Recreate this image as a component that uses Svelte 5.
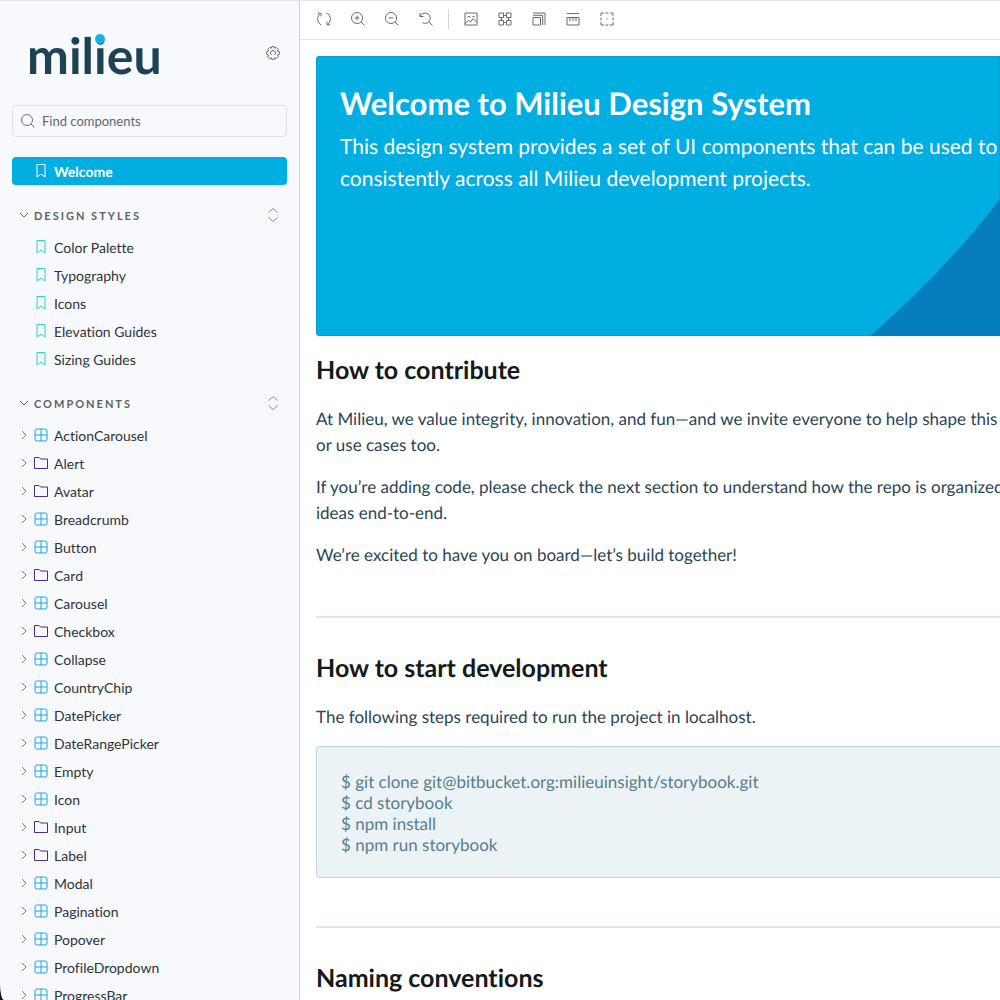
<script>
    const pages = ["Color Palette", "Typography", "Icons", "Elevation Guides", "Sizing Guides"];

    const components = [
        { name: "ActionCarousel" },
        { name: "Alert", folder: true },
        { name: "Avatar", folder: true },
        { name: "Breadcrumb" },
        { name: "Button" },
        { name: "Card", folder: true },
        { name: "Carousel" },
        { name: "Checkbox", folder: true },
        { name: "Collapse" },
        { name: "CountryChip" },
        { name: "DatePicker" },
        { name: "DateRangePicker" },
        { name: "Empty" },
        { name: "Icon" },
        { name: "Input", folder: true },
        { name: "Label", folder: true },
        { name: "Modal" },
        { name: "Pagination" },
        { name: "Popover" },
        { name: "ProfileDropdown" },
        { name: "ProgressBar" },
    ];

    const zoomTools = [
        {
            label: "Remount component",
            d: "M4.500 13C-.5 10.500-.5 4.500 3.500 1.500M.8 1.200h3.200v3.200M9.500 1C14.500 3.500 14.500 9.500 10.500 12.500M13.200 12.800H10V9.600",
        },
        { label: "Zoom in", d: "M6 .5a5.500 5.500 0 1 0 0 11A5.500 5.500 0 0 0 6 .5M10 10l3.500 3.500M6 3.500v5M3.500 6h5" },
        { label: "Zoom out", d: "M6 .5a5.500 5.500 0 1 0 0 11A5.500 5.500 0 0 0 6 .5M10 10l3.500 3.500M3.500 6h5" },
        { label: "Reset zoom", d: "M1 1v3.500h3.500M1.200 4.300A5.200 5.200 0 1 1 3.500 10.800M10 10l3.500 3.500" },
    ];

    const viewTools = [
        {
            label: "Change background",
            d: "M1 1h12v12H1zM3.500 5.500l1.500-1.500 1.500 1.500M1 11.500l3.500-3 2 1.500 2.500-3.500 4 4M8.500 4.500h2",
        },
        {
            label: "Apply grid",
            d: "M1 1h4.500v4.500H1zM8.500 1H13v4.500H8.500zM1 8.500h4.500V13H1zM8.500 8.500H13V13H8.500zM5.500 3.500h3M5.500 10.500h3M3.500 5.500v3M10.500 5.500v3",
        },
        { label: "Change viewport", d: "M1 5.500h7.500V13H1zM1 3.300h9.700V13M1 1h12v12" },
        { label: "Measure", d: "M1 1.500h12M1 5.500h12v7.500H1zM4 5.500v3.500M7 5.500v3.500M10 5.500v3.500" },
        {
            label: "Apply outlines",
            d: "M1 4V1h3M5.500 1h3M10 1h3v3M13 5.500v3M13 10v3h-3M8.500 13h-3M4 13H1v-3M1 8.500v-3M6.500 7h1",
        },
    ];

    let search = "";
    let open = { styles: true, components: true };
</script>

{#snippet bookmark()}
    <svg class="bookmark" width="14" height="14" viewBox="0 0 14 14" aria-hidden="true">
        <path d="M3 0.500h8v12.500L7 10.200 3 13z" />
    </svg>
{/snippet}

{#snippet heading(key, text)}
    <div class="heading">
        <button class="toggle" aria-expanded={open[key]} on:click={() => (open[key] = !open[key])}>
            <svg width="10" height="10" viewBox="0 0 10 10" aria-hidden="true"><path d="M1 3l4 4 4-4" /></svg>
            {text}
        </button>
        <button class="expand" aria-label="Expand all">
            <svg width="14" height="16" viewBox="0 0 14 16" aria-hidden="true">
                <path d="M2.500 5.500L7 1.500l4.500 4M2.500 10.500l4.500 4 4.500-4" />
            </svg>
        </button>
    </div>
{/snippet}

{#snippet tool(item)}
    <button class="tool" aria-label={item.label}>
        <svg width="14" height="14" viewBox="0 0 14 14" aria-hidden="true"><path d={item.d} /></svg>
    </button>
{/snippet}

<div class="app">
    <nav class="sidebar">
        <div class="brand">
            <a href="#home" aria-label="Milieu">
                <svg class="logo" width="140" height="56" viewBox="0 0 140 56">
                    <text x="-1" y="49">milieu</text>
                    <circle cx="72" cy="14" r="5" />
                </svg>
            </a>
            <button class="settings" aria-label="Settings">
                <svg width="14" height="14" viewBox="0 0 14 14" aria-hidden="true">
                    <path
                        d="M5.700 0.700h2.600l.5 1.500 1.500-.7 1.900 1.900-.7 1.500 1.800.8v2.600l-1.800.8.7 1.500-1.900 1.900-1.500-.7-.5 1.500H5.700l-.5-1.500-1.500.7-1.900-1.900.7-1.500-1.800-.8V5.700l1.800-.8-.7-1.500 1.900-1.900 1.500.7z"
                    />
                    <path d="M5.500 9A2.500 2.500 0 1 1 8.500 9" />
                </svg>
            </button>
        </div>

        <label class="search">
            <svg width="14" height="14" viewBox="0 0 14 14" aria-hidden="true">
                <path d="M6 .5a5.500 5.500 0 1 0 0 11a5.500 5.500 0 0 0 0-11M10 10l3.500 3.500" />
            </svg>
            <input type="text" placeholder="Find components" aria-label="Find components" bind:value={search} />
        </label>

        <a class="item selected" href="#welcome">{@render bookmark()}Welcome</a>

        {@render heading("styles", "Design Styles")}
        {#if open.styles}
            {#each pages as page}
                <a class="item" href="#{page}">{@render bookmark()}{page}</a>
            {/each}
        {/if}

        {@render heading("components", "Components")}
        {#if open.components}
            {#each components as { name, folder }}
                <button class="item">
                    <svg class="chevron" width="8" height="10" viewBox="0 0 8 10" aria-hidden="true">
                        <path d="M2 1l4 4-4 4" />
                    </svg>
                    {#if folder}
                        <svg class="folder" width="14" height="14" viewBox="0 0 14 14" aria-hidden="true">
                            <path d="M.5 1.500h4.500l1.500 1.500h7v9.500H.5z" />
                        </svg>
                    {:else}
                        <svg class="component" width="14" height="14" viewBox="0 0 14 14" aria-hidden="true">
                            <rect x="1" y="1" width="12" height="12" rx="2" />
                            <path d="M7 1v12M1 7h12" />
                        </svg>
                    {/if}
                    {name}
                </button>
            {/each}
        {/if}
    </nav>

    <main>
        <div class="toolbar">
            {#each zoomTools as item}
                {@render tool(item)}
            {/each}
            <span class="divider"></span>
            {#each viewTools as item}
                {@render tool(item)}
            {/each}
        </div>

        <div class="docs">
            <header class="banner">
                <h1>Welcome to Milieu Design System</h1>
                <p>
                    This design system provides a set of UI components that can be used to im<br />
                    consistently across all Milieu development projects.
                </p>
                <svg class="curve" width="130" height="137" viewBox="0 0 130 137" aria-hidden="true">
                    <path d="M0 137Q75 72 130 0v137z" />
                </svg>
            </header>

            <section>
                <h2>How to contribute</h2>
                <p>
                    At Milieu, we value integrity, innovation, and fun—and we invite everyone to help shape this d<br />
                    or use cases too.
                </p>
                <p>
                    If you’re adding code, please check the next section to understand how the repo is organized f<br />
                    ideas end-to-end.
                </p>
                <p>We’re excited to have you on board—let’s build together!</p>
            </section>

            <section>
                <h2>How to start development</h2>
                <p>The following steps required to run the project in localhost.</p>
                <pre>$ git clone git@bitbucket.org:milieuinsight/storybook.git
$ cd storybook
$ npm install
$ npm run storybook</pre>
            </section>

            <section>
                <h2>Naming conventions</h2>
            </section>
        </div>
    </main>
</div>

<style>
    :global(body) {
        margin: 0;
        overflow: hidden;
    }

    * {
        box-sizing: border-box;
    }

    .app {
        display: flex;
        height: 100vh;
        overflow: hidden;
        background: #111;
        font-family: "Lato", sans-serif;
        font-variant-ligatures: none;
        text-rendering: geometricPrecision;
    }

    svg {
        flex: none;
        fill: none;
        stroke: currentColor;
    }

    button {
        padding: 0;
        border: 0;
        background: none;
        font: inherit;
        color: inherit;
        cursor: pointer;
    }

    .sidebar {
        flex: none;
        width: 300px;
        padding: 0 12px;
        overflow: hidden;
        border-top: 1px solid #e3e6e9;
        border-right: 1px solid #cdd1d5;
        border-bottom-left-radius: 4px 16px;
        background: #f7f9fd;
        font-size: 14px;
        color: #2e3438;
    }

    .brand {
        display: flex;
        align-items: center;
        justify-content: space-between;
        height: 104px;
        padding: 0 7px 0 16px;
    }

    .brand a {
        display: flex;
    }

    .logo text {
        fill: #1c4354;
        stroke: none;
        font-size: 50px;
        font-weight: 700;
    }

    .logo circle {
        fill: #18b3e6;
        stroke: none;
    }

    .settings,
    .expand {
        display: flex;
        color: #5c6570;
    }

    .expand {
        color: #858c94;
    }

    .search {
        display: flex;
        align-items: center;
        gap: 7px;
        height: 32px;
        margin-bottom: 20px;
        padding: 0 8px;
        border: 1px solid #dde1e6;
        border-radius: 4px;
        font-size: 13px;
        color: #6b7278;
    }

    .search input {
        flex: 1;
        min-width: 0;
        padding: 0;
        border: 0;
        outline: 0;
        background: none;
        font: inherit;
        color: #2e3438;
    }

    .search input::placeholder {
        color: #60676e;
        opacity: 1;
    }

    .item {
        display: flex;
        align-items: center;
        gap: 6px;
        width: 100%;
        height: 28px;
        padding-left: 22px;
        border-radius: 4px;
        color: #2e3438;
        text-decoration: none;
    }

    button.item {
        padding-left: 8px;
    }

    .item.selected {
        background: #00aee2;
        color: #fff;
        font-weight: 700;
    }

    .bookmark {
        color: #2fcfcb;
    }

    .selected .bookmark {
        color: #fff;
    }

    .chevron {
        color: #7b828a;
    }

    .folder {
        color: #4b2e83;
    }

    .component {
        color: #1ea7dd;
    }

    .heading {
        display: flex;
        align-items: center;
        justify-content: space-between;
        height: 28px;
        margin: 16px 0 4px;
        padding: 0 7px;
    }

    .toggle {
        display: flex;
        align-items: center;
        gap: 5px;
        font-size: 11px;
        font-weight: 700;
        letter-spacing: 2px;
        text-transform: uppercase;
        color: #5c6368;
    }

    main {
        flex: 1;
        min-width: 0;
        overflow: hidden;
        background: #fff;
    }

    .toolbar {
        display: flex;
        align-items: center;
        gap: 6px;
        height: 40px;
        padding: 0 10px 2px;
        border-top: 1px solid #e3e6e9;
        border-bottom: 1px solid #dfe3e5;
    }

    .tool {
        display: flex;
        align-items: center;
        justify-content: center;
        width: 28px;
        height: 28px;
        color: #646c73;
    }

    .divider {
        width: 1px;
        height: 20px;
        margin: 0 2px;
        background: #d3d7da;
    }

    .docs {
        padding: 16px 0 0 16px;
        white-space: nowrap;
    }

    .banner {
        position: relative;
        height: 280px;
        padding: 27px 24px;
        overflow: hidden;
        border-radius: 4px 0 0 4px;
        box-shadow: inset 0 0 0 1px #0a9fd0;
        background: #00aee2;
        color: #fff;
    }

    .banner h1 {
        margin: 0 0 8px;
        font-size: 31px;
        line-height: 40px;
    }

    .banner p {
        margin: 0;
        font-size: 21px;
        line-height: 32px;
    }

    .curve {
        position: absolute;
        right: 0;
        bottom: 0;
    }

    .curve path {
        fill: #057dbc;
        stroke: none;
    }

    section {
        padding: 16px 0 32px;
    }

    section + section {
        padding-top: 32px;
        border-top: 2px solid #dde6e9;
    }

    h2 {
        margin: 0 0 18px;
        font-size: 25px;
        line-height: 36px;
        color: #14191c;
    }

    section p {
        margin: 0 0 16px;
        font-size: 17px;
        line-height: 26px;
        color: #294653;
    }

    pre {
        margin: 0 0 16px;
        padding: 24px 24px 22px;
        border: 1px solid #bcd6dc;
        border-right: 0;
        border-radius: 4px 0 0 4px;
        background: #ebf3f5;
        font-family: inherit;
        font-size: 17px;
        line-height: 21px;
        color: #557f8e;
    }
</style>
